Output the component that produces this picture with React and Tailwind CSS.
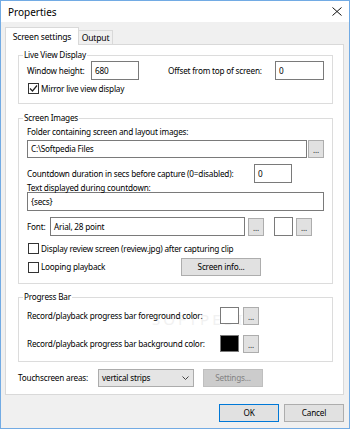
import React from 'react'

const font = "font-['Noto_Sans','Liberation_Sans',sans-serif]"

function TextBox({ value, className = '' }) {
  return (
    <div className={`h-[19px] border border-[#7a7a7a] bg-white flex items-center pl-[3px] ${className}`}>
      <span className="whitespace-nowrap">{value}</span>
    </div>
  )
}

function DotsButton({ className = '' }) {
  return (
    <div className={`w-[16px] h-[18px] border border-[#adadad] bg-[#e1e1e1] flex items-end justify-center pb-[3px] text-[8px] leading-none text-[#222] ${className}`}>
      ...
    </div>
  )
}

function CheckBox({ checked, label }) {
  return (
    <div className="flex items-center h-[11px]">
      <div className="ml-[1px] w-[11px] h-[11px] border border-[#333] bg-white flex items-center justify-center">
        {checked && (
          <svg width="9" height="9" viewBox="0 0 9 9">
            <path d="M1 4.5 L3.5 7 L8 1.5" fill="none" stroke="#222" strokeWidth="1.2" />
          </svg>
        )}
      </div>
      <span className="ml-[2px] whitespace-nowrap">{label}</span>
    </div>
  )
}

function Group({ title, className = '', children }) {
  return (
    <div className={`relative border border-[#dcdcdc] ${className}`}>
      <span className="absolute -top-[7px] left-[4px] bg-white px-[1px] leading-[12px] whitespace-nowrap">
        {title}
      </span>
      {children}
    </div>
  )
}

export default function App() {
  return (
    <div className={`w-[350px] h-[429px] flex flex-col bg-[#f0f0f0] border border-[#72abe4] text-black text-[8.2px] tracking-[-0.2px] leading-[12px] ${font}`}>
      {/* Title bar */}
      <div className="h-[21px] bg-white flex items-center justify-between pl-[7px] pr-[7px]">
        <span className="text-[10px] tracking-normal">Properties</span>
        <svg width="10" height="9" viewBox="0 0 10 9">
          <path d="M0.5 0.5 L9.5 8.5 M9.5 0.5 L0.5 8.5" stroke="#111" strokeWidth="1" />
        </svg>
      </div>

      <div className="flex-1 flex flex-col pl-[4px] pr-[5px] pt-[5px]">
        {/* Tabs */}
        <div className="h-[17px] flex items-end">
          <div className="relative z-10 w-[74px] h-[18px] -mb-[1px] border border-b-0 border-[#d9d9d9] bg-white flex items-center justify-center text-[8.6px]">
            Screen settings
          </div>
          <div className="w-[34px] h-[14px] border-t border-r border-[#d9d9d9] bg-[#f0f0f0] flex items-center justify-center text-[8.6px]">
            Output
          </div>
        </div>

        {/* Tab page */}
        <div className="relative h-[351px] w-[339px] border border-[#d9d9d9] bg-white pl-[12px] pt-[10px]">
          {/* watermark */}
          <span className="absolute left-[146px] top-[268px] text-[15px] tracking-[3px] text-[#f1f1f1] pointer-events-none">
            SOFTPEDIA
          </span>

          <Group title="Live View Display" className="w-[315px] h-[49px] pl-[8px] pt-[5px]">
            <div className="flex items-center h-[19px]">
              <span className="w-[64px] whitespace-nowrap">Window height:</span>
              <TextBox value="680" className="w-[48px]" />
              <span className="ml-[29px] w-[107px] whitespace-nowrap">Offset from top of screen:</span>
              <TextBox value="0" className="w-[49px]" />
            </div>
            <div className="mt-[3px]">
              <CheckBox checked label="Mirror live view display" />
            </div>
          </Group>

          <Group title="Screen Images" className="mt-[14px] w-[315px] h-[166px] pl-[8px] pt-[6px]">
            <div className="h-[13px] flex items-center whitespace-nowrap">
              Folder containing screen and layout images:
            </div>
            <div className="mt-[2px] flex">
              <div className="w-[280px] h-[18px] border border-[#7a7a7a] bg-white flex items-center pl-[3px]">
                C:\Softpedia Files
              </div>
              <DotsButton className="ml-[1px]" />
            </div>
            <div className="mt-[6px] flex items-center h-[19px]">
              <span className="w-[227px] whitespace-nowrap">Countdown duration in secs before capture (0=disabled):</span>
              <TextBox value="0" className="w-[38px]" />
            </div>
            <div className="h-[9px] leading-[9px] whitespace-nowrap">Text displayed during countdown:</div>
            <TextBox value="{secs}" className="w-[297px]" />
            <div className="mt-[6px] flex items-center h-[19px]">
              <span className="w-[23px]">Font:</span>
              <TextBox value="Arial, 28 point" className="w-[195px]" />
              <DotsButton className="ml-[3px]" />
              <div className="ml-[10px] w-[19px] h-[19px] border border-[#7a7a7a] bg-white" />
              <DotsButton className="ml-[3px]" />
            </div>
            <div className="mt-[7px]">
              <CheckBox label="Display review screen (review.jpg) after capturing clip" />
            </div>
            <div className="mt-[4px] flex items-center h-[18px]">
              <div className="w-[154px]">
                <CheckBox label="Looping playback" />
              </div>
              <div className="w-[80px] h-[18px] border border-[#adadad] bg-[#e1e1e1] flex items-center justify-center">
                Screen info...
              </div>
            </div>
          </Group>

          <Group title="Progress Bar" className="mt-[13px] w-[315px] h-[65px] pl-[8px] pt-[9px]">
            <div className="flex items-center h-[17px]">
              <span className="w-[193px] whitespace-nowrap">Record/playback progress bar foreground color:</span>
              <div className="w-[19px] h-[17px] border border-[#7a7a7a] bg-white" />
              <DotsButton className="ml-[4px] h-[17px]" />
            </div>
            <div className="mt-[11px] flex items-center h-[17px]">
              <span className="w-[193px] whitespace-nowrap">Record/playback progress bar background color:</span>
              <div className="w-[19px] h-[17px] border border-[#7a7a7a] bg-black" />
              <DotsButton className="ml-[4px] h-[17px]" />
            </div>
          </Group>

          <div className="mt-[6px] flex items-center h-[19px]">
            <span className="w-[80px] whitespace-nowrap">Touchscreen areas:</span>
            <div className="w-[96px] h-[18px] border border-[#acacac] bg-[#e5e5e5] flex items-center justify-between pl-[3px] pr-[4px]">
              <span>vertical strips</span>
              <svg width="7" height="4" viewBox="0 0 7 4">
                <path d="M0.5 0.5 L3.5 3.5 L6.5 0.5" fill="none" stroke="#444" strokeWidth="1" />
              </svg>
            </div>
            <div className="ml-[9px] w-[60px] h-[18px] border border-[#bfbfbf] bg-[#cccccc] text-[#838383] flex items-center justify-center">
              Settings...
            </div>
          </div>
        </div>

        {/* Dialog buttons */}
        <div className="mt-[9px] flex justify-end gap-[5px]">
          <div className="w-[60px] h-[18px] border border-[#0078d7] bg-[#e1e1e1] flex items-center justify-center">OK</div>
          <div className="w-[60px] h-[18px] border border-[#adadad] bg-[#e1e1e1] flex items-center justify-center">Cancel</div>
        </div>
      </div>
    </div>
  )
}
